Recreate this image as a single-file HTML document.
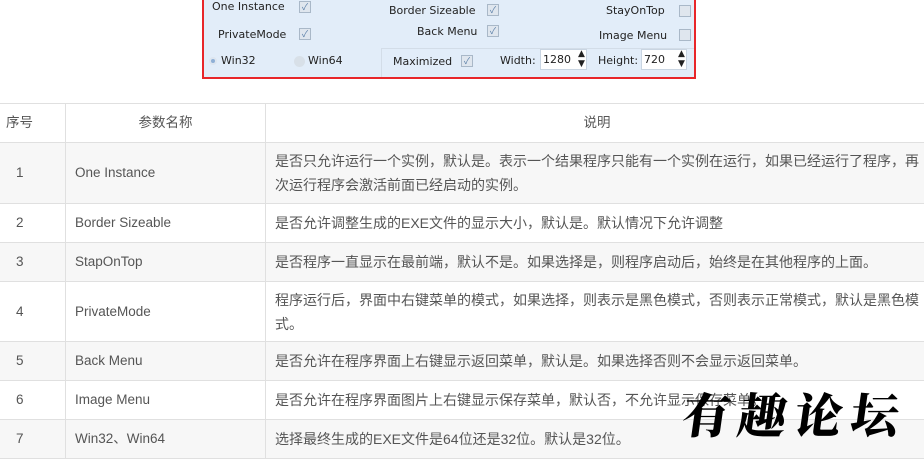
<!DOCTYPE html>
<html><head><meta charset="utf-8"><style>
*{margin:0;padding:0;box-sizing:border-box}
body{width:924px;height:454px;overflow:hidden;background:#fff;font-family:"Liberation Sans","Noto Sans CJK SC",sans-serif;position:relative}
.panel{position:absolute;left:202px;top:-4px;width:494px;height:83px;border:2px solid #e8262a;background:#e2edf9}
.p{position:absolute;font-family:"DejaVu Sans","Noto Sans CJK SC",sans-serif;font-size:11px;color:#222;white-space:nowrap}
.cb{position:absolute;width:12px;height:12px;border:1px solid #a9b8c8;background:#dfe6ee;font-size:9px;line-height:10px;text-align:center;color:#5a7fa8}
.sp{position:absolute;height:21px;background:#fff;border:1px solid #c9d5e2;font-family:"DejaVu Sans",sans-serif;font-size:11px;padding:3px 0 0 2px;color:#222}
.inner{position:absolute;left:177px;top:50px;width:313px;height:29px;border-left:1px solid #d3dde8;border-top:1px solid #d3dde8}
table{position:absolute;left:-1px;top:103px;border-collapse:collapse;width:930px;table-layout:fixed}
td{border:1px solid #e0e0e0;font-size:13.5px;color:#555;vertical-align:middle;line-height:24px}
tr.g td{background:#f7f7f7}
td.c1{text-align:left;padding-left:6px}
td.c2{padding-left:9px}
td.c3{padding-left:9px;padding-right:5px;font-size:14px}
.wm{position:absolute;left:683px;top:383px;font-family:"Noto Serif CJK SC",serif;font-weight:900;font-size:48px;color:#000;letter-spacing:8px;line-height:60px;transform:skewX(-8deg)}
</style></head><body>
<div class="panel">
<div class="inner"></div>
<div class="p" style="left:8px;top:2px">One Instance</div><div class="cb" style="left:95px;top:3px">✓</div>
<div class="p" style="left:185px;top:6px">Border Sizeable</div><div class="cb" style="left:283px;top:6px">✓</div>
<div class="p" style="left:402px;top:6px">StayOnTop</div><div class="cb" style="left:475px;top:7px"></div>
<div class="p" style="left:14px;top:30px">PrivateMode</div><div class="cb" style="left:95px;top:30px">✓</div>
<div class="p" style="left:213px;top:27px">Back Menu</div><div class="cb" style="left:283px;top:27px">✓</div>
<div class="p" style="left:395px;top:31px">Image Menu</div><div class="cb" style="left:475px;top:31px"></div>
<div style="position:absolute;left:5px;top:59px;width:8px;height:8px;border-radius:50%;background:#8fb0d6;border:2px solid #dde6f0"></div>
<div class="p" style="left:17px;top:56px">Win32</div>
<div style="position:absolute;left:90px;top:58px;width:11px;height:11px;border-radius:50%;background:#d8e0e8"></div>
<div class="p" style="left:104px;top:56px">Win64</div>
<div class="p" style="left:189px;top:57px">Maximized</div><div class="cb" style="left:257px;top:57px">✓</div>
<div class="p" style="left:296px;top:56px">Width:</div>
<div class="sp" style="left:336px;top:51px;width:47px">1280</div>
<div class="p" style="left:374px;top:51px;font-size:9px;line-height:10px">▲<br>▼</div>
<div class="p" style="left:394px;top:56px">Height:</div>
<div class="sp" style="left:437px;top:51px;width:46px">720</div>
<div class="p" style="left:474px;top:51px;font-size:9px;line-height:10px">▲<br>▼</div>
</div>

<table>
<col style="width:66px"><col style="width:200px"><col>
<tr style="height:39px"><td class="c1">序号</td><td style="text-align:center">参数名称</td><td style="text-align:center">说明</td></tr>
<tr class="g" style="height:61px"><td class="c1" style="padding-left:16px">1</td><td class="c2">One Instance</td><td class="c3">是否只允许运行一个实例，默认是。表示一个结果程序只能有一个实例在运行，如果已经运行了程序，再次运行程序会激活前面已经启动的实例。</td></tr>
<tr style="height:39px"><td class="c1" style="padding-left:16px">2</td><td class="c2">Border Sizeable</td><td class="c3">是否允许调整生成的EXE文件的显示大小，默认是。默认情况下允许调整</td></tr>
<tr class="g" style="height:39px"><td class="c1" style="padding-left:16px">3</td><td class="c2">StapOnTop</td><td class="c3">是否程序一直显示在最前端，默认不是。如果选择是，则程序启动后，始终是在其他程序的上面。</td></tr>
<tr style="height:60px"><td class="c1" style="padding-left:16px">4</td><td class="c2">PrivateMode</td><td class="c3">程序运行后，界面中右键菜单的模式，如果选择，则表示是黑色模式，否则表示正常模式，默认是黑色模式。</td></tr>
<tr class="g" style="height:39px"><td class="c1" style="padding-left:16px">5</td><td class="c2">Back Menu</td><td class="c3">是否允许在程序界面上右键显示返回菜单，默认是。如果选择否则不会显示返回菜单。</td></tr>
<tr style="height:39px"><td class="c1" style="padding-left:16px">6</td><td class="c2">Image Menu</td><td class="c3">是否允许在程序界面图片上右键显示保存菜单，默认否，不允许显示保存菜单。</td></tr>
<tr class="g" style="height:39px"><td class="c1" style="padding-left:16px">7</td><td class="c2">Win32、Win64</td><td class="c3">选择最终生成的EXE文件是64位还是32位。默认是32位。</td></tr>
</table>
<div class="wm">有趣论坛</div>
</body></html>
